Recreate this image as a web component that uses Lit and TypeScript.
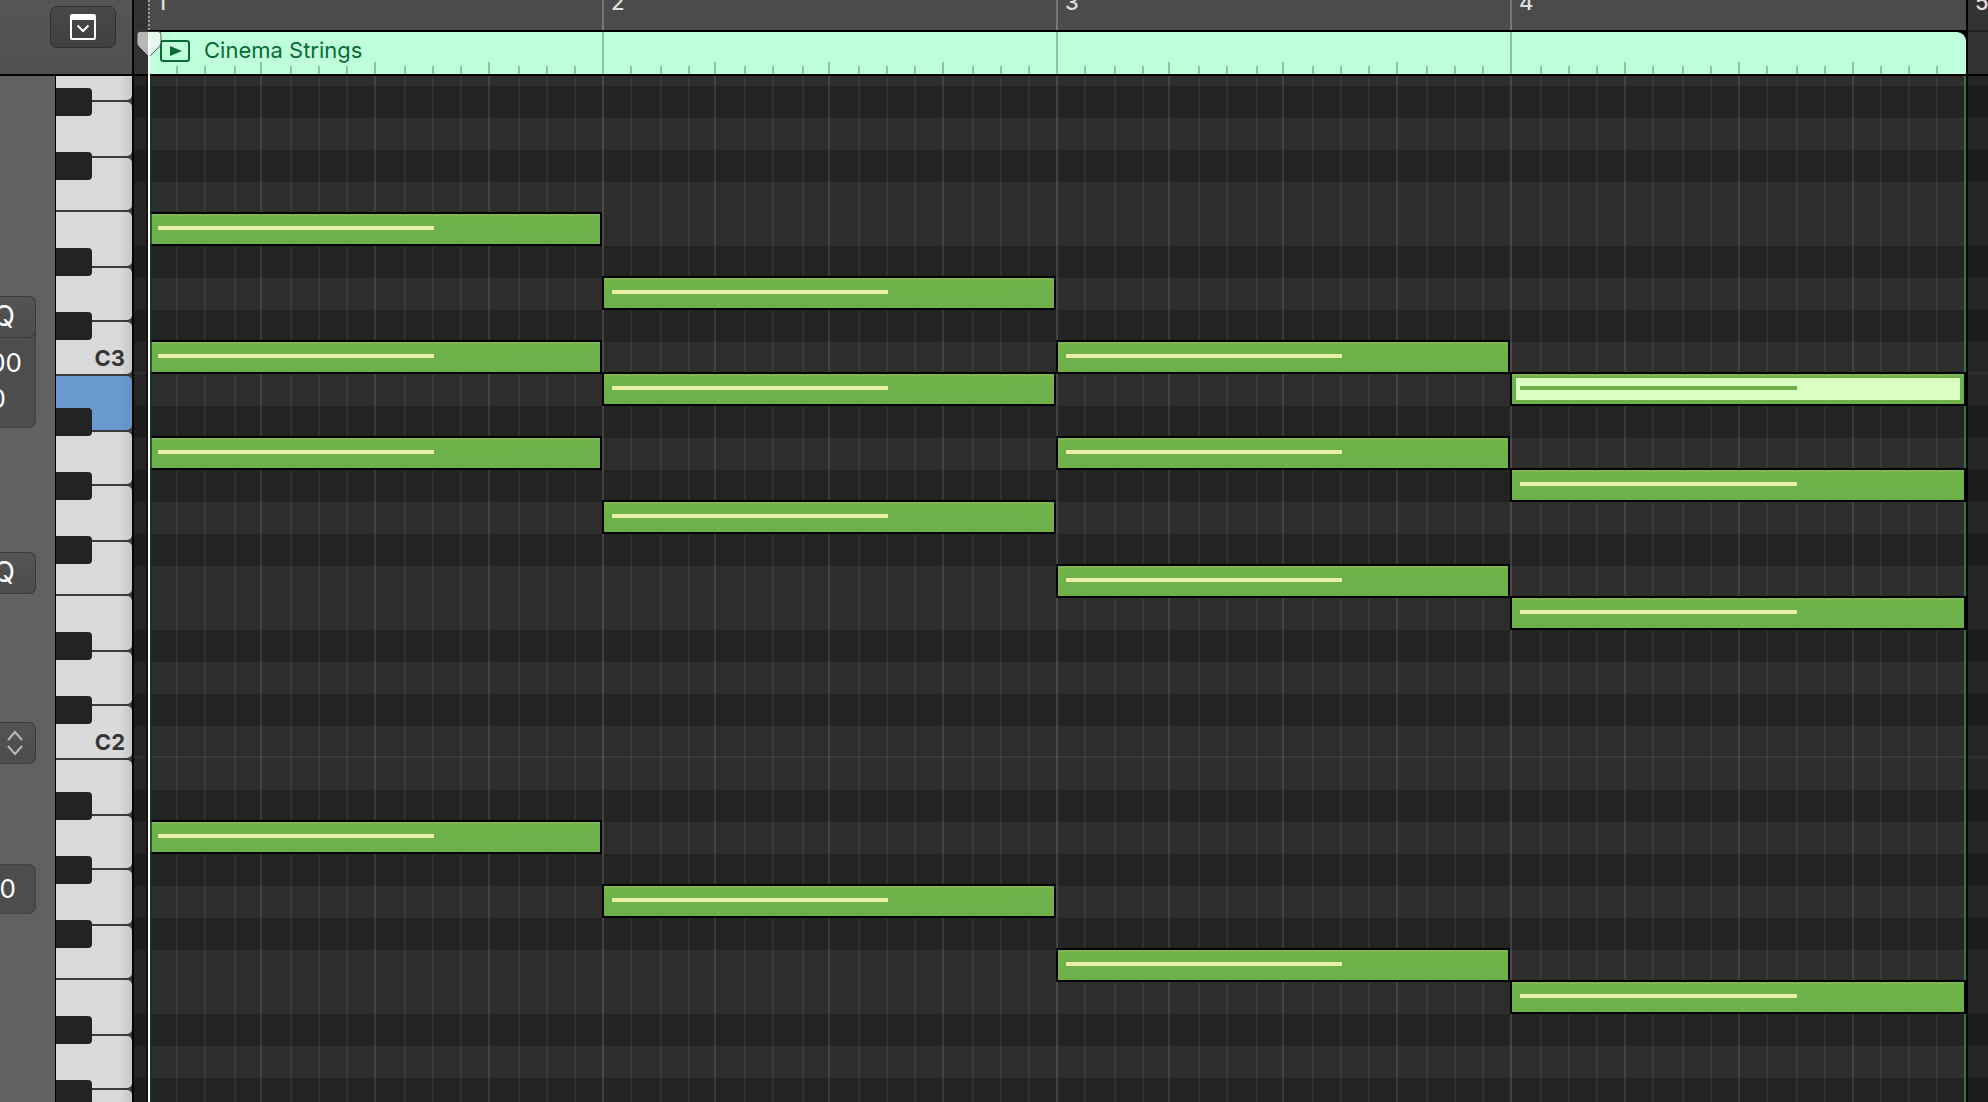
import { LitElement, html, css, svg, unsafeCSS, nothing } from "lit";
import { customElement, property } from "lit/decorators.js";

const BARS = 4;
const STEPS_PER_BAR = 16;

// Relative widths of the sixteen steps of every bar, on an even-pixel raster.
const STEP_WIDTHS = [
  28, 28, 30, 26, 30, 28, 28, 28, 30, 28, 28, 28, 30, 28, 28, 28,
  28, 30, 28, 26, 30, 28, 30, 26, 30, 28, 28, 28, 30, 28, 28, 28,
  28, 30, 28, 26, 30, 28, 30, 26, 30, 28, 28, 28, 30, 28, 28, 28,
  30, 28, 28, 28, 28, 30, 28, 28, 28, 30, 28, 28, 28, 28, 28, 30,
];
const COLUMNS = unsafeCSS(
  `14px ${STEP_WIDTHS.map((w) => `minmax(0, ${w}fr)`).join(" ")} 22px`
);

const OCTAVES = [3, 2, 1];
const NAMES = ["B", "A#", "A", "G#", "G", "F#", "F", "E", "D#", "D", "C#", "C"];
const PITCHES = OCTAVES.flatMap((o) => NAMES.map((n) => `${n}${o}`));

interface Note {
  bar: number;
  pitch: string;
  selected?: boolean;
}

const NOTES: Note[] = [
  { bar: 1, pitch: "E3" },
  { bar: 1, pitch: "C3" },
  { bar: 1, pitch: "A2" },
  { bar: 1, pitch: "A1" },
  { bar: 2, pitch: "D3" },
  { bar: 2, pitch: "B2" },
  { bar: 2, pitch: "G2" },
  { bar: 2, pitch: "G1" },
  { bar: 3, pitch: "C3" },
  { bar: 3, pitch: "A2" },
  { bar: 3, pitch: "F2" },
  { bar: 3, pitch: "F1" },
  { bar: 4, pitch: "B2", selected: true },
  { bar: 4, pitch: "G#2" },
  { bar: 4, pitch: "E2" },
  { bar: 4, pitch: "E1" },
];

const stepKind = (i: number) =>
  i % STEPS_PER_BAR === 0 ? "bar" : i % 4 === 0 ? "beat" : "step";

const shared = css`
  *,
  *::before {
    box-sizing: border-box;
  }
  :host {
    font-family: Inter, "Liberation Sans", sans-serif;
  }
  button,
  input {
    font: inherit;
    margin: 0;
    padding: 0;
    border: 0;
    background: none;
    color: inherit;
  }
  svg {
    display: block;
  }
`;

@customElement("roll-inspector")
export class RollInspector extends LitElement {
  static styles = [
    shared,
    css`
      :host {
        box-sizing: border-box;
        display: flex;
        flex-direction: column;
        width: 56px;
        padding: 220px 19px 0 0;
        background: #616161;
        border-right: 1px solid #000;
        color: #fff;
        font-size: 26px;
        overflow: hidden;
      }
      .control {
        display: flex;
        flex: none;
        align-items: center;
        justify-content: flex-end;
        width: 100%;
        height: 42px;
        border: 1px solid #3b3b3b;
        border-left: 0;
        border-radius: 0 7px 7px 0;
        background: linear-gradient(#545454, #4c4c4c);
      }
      .text {
        padding: 0 20px 2px 0;
        font-size: 28px;
      }
      .group {
        display: flex;
        flex: none;
        flex-direction: column;
        height: 132px;
        border-radius: 0 8px 8px 0;
        background: #4d4d4d;
        box-shadow: inset -1px -1px #424242;
      }
      .value {
        align-self: flex-end;
        width: 80px;
        height: 36px;
        text-align: right;
      }
      .first {
        margin-top: 6px;
        padding-right: 14px;
      }
      .second {
        padding-right: 30px;
      }
      .gap-large {
        margin-top: 124px;
      }
      .gap-medium {
        margin-top: 128px;
      }
      .gap-small {
        margin-top: 100px;
      }
      .chevrons {
        padding-right: 11px;
      }
      .field {
        align-self: flex-end;
        flex: none;
        width: 80px;
        height: 50px;
        padding: 0 20px 2px 0;
        text-align: right;
        border-radius: 0 8px 8px 0;
        background: #4d4d4d;
        box-shadow: inset -1px -1px #424242, inset 0 1px #424242;
      }
    `,
  ];

  render() {
    return html`
      <div class="group">
        <button class="control text">Q</button>
        <input class="value first" aria-label="Strength" value="00" />
        <input class="value second" aria-label="Swing" value="0" />
      </div>
      <button class="control text gap-large">Q</button>
      <button class="control chevrons gap-medium" aria-label="Scale">
        <svg width="18" height="28" viewBox="0 0 18 28" fill="none" stroke="#b9b9b9" stroke-width="2">
          <path d="M2 11 L9 3 L16 11 M2 17 L9 25 L16 17" />
        </svg>
      </button>
      <input class="field gap-small" aria-label="Velocity" value="0" />
    `;
  }
}

@customElement("piano-keys")
export class PianoKeys extends LitElement {
  @property() pressed = "";

  static styles = [
    shared,
    css`
      :host {
        display: block;
        width: 76px;
        overflow: hidden;
      }
      .keys {
        margin-top: -86px;
      }
      .octave {
        display: grid;
        background: #3b3b3d;
      }
      .whites,
      .blacks {
        grid-area: 1 / 1;
        display: grid;
      }
      .whites {
        grid-template-rows: 56px 54px 56px 54px 56px 54px 54px;
      }
      .blacks {
        grid-template-rows: repeat(12, 32px);
        width: 36px;
      }
      .white {
        display: flex;
        align-items: flex-end;
        justify-content: flex-end;
        margin-top: 2px;
        padding: 0 7px 2px 0;
        border-radius: 0 5px 5px 0;
        background: linear-gradient(90deg, #d9d9db 84%, #c6c6c8);
        color: #353537;
        font-size: 22px;
        line-height: 28px;
        font-weight: 700;
      }
      .pressed {
        background: linear-gradient(90deg, #6999ce 84%, #6492c4);
      }
      .black {
        height: 28px;
        margin-top: 2px;
        border-radius: 0 4px 4px 0;
        background: #232323;
      }
    `,
  ];

  render() {
    return html`<div class="keys">
      ${OCTAVES.map(
        (octave) => html`<div class="octave">
          <div class="whites">
            ${NAMES.filter((n) => n.length === 1).map((n) => {
              const name = `${n}${octave}`;
              return html`<button
                class="white ${name === this.pressed ? "pressed" : ""}"
                aria-label=${name}
              >${n === "C" ? name : nothing}</button>`;
            })}
          </div>
          <div class="blacks">
            ${NAMES.map((n, row) =>
              n.length === 2
                ? html`<button
                    class="black"
                    style="grid-row:${row + 1}"
                    aria-label="${n}${octave}"
                  ></button>`
                : nothing
            )}
          </div>
        </div>`
      )}
    </div>`;
  }
}

@customElement("roll-ruler")
export class RollRuler extends LitElement {
  static styles = [
    shared,
    css`
      :host {
        display: grid;
        grid-template-columns: ${COLUMNS};
        grid-template-rows: 32px 42px;
        height: 74px;
        overflow: hidden;
        background: #4b4b4b;
      }
      .outside {
        grid-row: 1 / 3;
        background: #333;
      }
      .before {
        grid-column: 1;
      }
      .after {
        grid-column: -2;
        border-left: 2px solid #000;
        background: linear-gradient(#333 30px, #202020 30px, #202020 32px, #333 32px);
      }
      .edge {
        grid-row: 1;
        grid-column: 2 / -2;
        align-self: end;
        height: 2px;
        background: #000;
      }
      .number {
        grid-row: 1;
        height: 30px;
        padding-left: 7px;
        border-left: 2px solid #787878;
        color: #dedede;
        font-size: 22px;
        line-height: 4px;
        font-weight: 500;
        white-space: nowrap;
      }
      .opening {
        border-left: 2px dotted #999;
      }
      .closing {
        border-color: #000;
      }
      .backing {
        grid-row: 2;
        grid-column: 2 / -2;
        background: #000;
      }
      .region {
        grid-row: 2;
        grid-column: 2 / -2;
        display: flex;
        align-items: flex-start;
        gap: 14px;
        padding: 6px 0 0 12px;
        border-radius: 0 9px 0 0;
        background: #c0ffdb;
        color: #0a6b32;
        font-size: 22px;
        line-height: 24px;
      }
      .region svg {
        margin-top: 2px;
      }
      .tick {
        grid-row: 2;
        align-self: end;
        width: 2px;
        background: #8fbfa4;
      }
      .bar {
        height: 42px;
      }
      .beat {
        height: 12px;
      }
      .step {
        height: 8px;
      }
    `,
  ];

  render() {
    return html`
      <div class="outside before"></div>
      <div class="outside after"></div>
      <div class="edge"></div>
      ${Array.from({ length: BARS + 1 }, (_, bar) => {
        const start = 2 + bar * STEPS_PER_BAR;
        const kind = bar === 0 ? "opening" : bar === BARS ? "closing" : "";
        return html`<div class="number ${kind}" style="grid-column:${start}">${bar + 1}</div>`;
      })}
      <div class="backing"></div>
      <div class="region">
        <svg width="30" height="22" viewBox="0 0 30 22">
          <rect x="1" y="1" width="28" height="20" rx="2" fill="none" stroke="#0a6b32" stroke-width="2" />
          <path d="M10 6 L22 11 L10 16 Z" fill="#0a6b32" />
        </svg>
        <span>Cinema Strings</span>
      </div>
      ${STEP_WIDTHS.map((_, i) =>
        i === 0
          ? nothing
          : html`<div class="tick ${stepKind(i)}" style="grid-column:${i + 2}"></div>`
      )}
    `;
  }
}

@customElement("note-grid")
export class NoteGrid extends LitElement {
  static styles = [
    shared,
    css`
      :host {
        display: block;
        overflow: hidden;
        background: #2d2d2d;
      }
      .lanes {
        display: grid;
        grid-template-columns: ${COLUMNS};
        grid-template-rows: repeat(36, 32px);
        margin-top: -86px;
      }
      .lane {
        grid-column: 1 / -1;
      }
      .sharp {
        background: #232323;
      }
      .octave-line {
        border-bottom: 2px solid #393939;
      }
      .half-line {
        border-bottom: 2px solid #313131;
      }
      .line {
        grid-row: 1 / -1;
        width: 2px;
        background: rgba(255, 255, 255, 0.06);
      }
      .beat {
        background: rgba(255, 255, 255, 0.1);
      }
      .bar {
        background: rgba(255, 255, 255, 0.14);
      }
      .outside {
        grid-row: 1 / -1;
        background: rgba(0, 0, 0, 0.15);
      }
      .before {
        grid-column: 1;
        border-right: 2px solid #131313;
      }
      .after {
        grid-column: -2;
        border-left: 2px solid #000;
      }
      .region-start {
        grid-row: 1 / -1;
        grid-column: 2;
        width: 2px;
        margin-left: 2px;
        background: rgba(10, 58, 30, 0.75);
      }
      .region-end {
        grid-row: 1 / -1;
        grid-column: -3;
        justify-self: end;
        width: 2px;
        background: #237f4a;
      }
      .note {
        display: flex;
        align-items: flex-start;
        height: 34px;
        margin-top: -2px;
        padding: 12px 8px;
        border: 2px solid #000;
        background: linear-gradient(#7bb656 2px, #70b34b 2px, #6daf48);
      }
      .velocity {
        width: 63.6%;
        height: 4px;
        background: #e9eea6;
      }
      .selected {
        background: linear-gradient(#d9ffc2, #d9ffc2) 4px 4px / calc(100% - 8px) calc(100% - 8px)
            no-repeat,
          linear-gradient(#7bb656 2px, #6eb049 2px);
      }
      .selected .velocity {
        background: #6eb049;
      }
    `,
  ];

  private laneClass(pitch: string) {
    if (pitch[1] === "#") return "lane sharp";
    if (pitch[0] === "C") return "lane octave-line";
    return pitch[0] === "F" ? "lane half-line" : "lane";
  }

  render() {
    return html`<div class="lanes">
      ${PITCHES.map(
        (pitch, row) => html`<div class=${this.laneClass(pitch)} style="grid-row:${row + 1}"></div>`
      )}
      ${STEP_WIDTHS.map((_, i) =>
        i === 0
          ? nothing
          : html`<div class="line ${stepKind(i)}" style="grid-column:${i + 2}"></div>`
      )}
      <div class="outside before"></div>
      <div class="outside after"></div>
      <div class="region-end"></div>
      ${NOTES.map((note) => {
        const start = 2 + (note.bar - 1) * STEPS_PER_BAR;
        const row = PITCHES.indexOf(note.pitch) + 1;
        return html`<button
          class="note ${note.selected ? "selected" : ""}"
          style="grid-area:${row} / ${start} / auto / span ${STEPS_PER_BAR}"
          aria-label=${note.pitch}
        ><span class="velocity"></span></button>`;
      })}
      <div class="region-start"></div>
    </div>`;
  }
}

@customElement("app-root")
export class AppRoot extends LitElement {
  static styles = [
    shared,
    css`
      :host {
        position: relative;
        display: grid;
        grid-template-columns: auto auto minmax(0, 1fr);
        grid-template-rows: auto minmax(0, 1fr);
        height: 100vh;
        overflow: hidden;
        background: #000;
      }
      .corner {
        grid-column: 1 / 3;
        display: flex;
        align-items: flex-start;
        justify-content: flex-end;
        padding: 6px 16px 0 0;
        background: linear-gradient(#555, #515151);
        border-right: 2px solid #000;
      }
      .menu {
        display: grid;
        place-items: center;
        width: 66px;
        height: 42px;
        border: 1px solid #303030;
        border-radius: 7px;
        background: linear-gradient(#484848, #404040);
      }
      roll-inspector,
      piano-keys,
      note-grid {
        margin-top: 2px;
      }
      piano-keys {
        box-sizing: content-box;
        border-right: 2px solid #000;
      }
      .playhead {
        position: absolute;
        top: 30px;
        bottom: 0;
        left: 136px;
        display: flex;
        flex-direction: column;
        align-items: center;
        width: 26px;
        pointer-events: none;
      }
      .playhead svg {
        flex: none;
      }
      .stem {
        flex: 1;
        width: 2px;
        margin-top: -20px;
        background: #fff;
      }
    `,
  ];

  render() {
    return html`
      <div class="corner">
        <button class="menu" aria-label="Editor menu">
          <svg width="26" height="26" viewBox="0 0 26 26">
            <rect x="1" y="1" width="24" height="24" rx="1" fill="none" stroke="#fff" stroke-width="2" />
            <path d="M1 1 H25 V6 H1 Z" fill="#fff" />
            <path d="M7.500 11.500 L13 17 L18.500 11.500" fill="none" stroke="#fff" stroke-width="2" />
          </svg>
        </button>
      </div>
      <roll-ruler></roll-ruler>
      <roll-inspector></roll-inspector>
      <piano-keys pressed="B2"></piano-keys>
      <note-grid></note-grid>
      <div class="playhead">
        <svg width="26" height="28" viewBox="0 0 26 28">
          ${svg`<path d="M4 1.500 H22 Q25 1.500 25 4.500 V13 Q25 15 23 17 L14.500 25.500 Q13 27 11.500 25.500 L3 17 Q1 15 1 13 V4.500 Q1 1.500 4 1.500 Z"
            fill="#f6f6f6" fill-opacity="0.680" stroke="#222" stroke-opacity="0.700" stroke-width="1" />`}
        </svg>
        <div class="stem"></div>
      </div>
    `;
  }
}
